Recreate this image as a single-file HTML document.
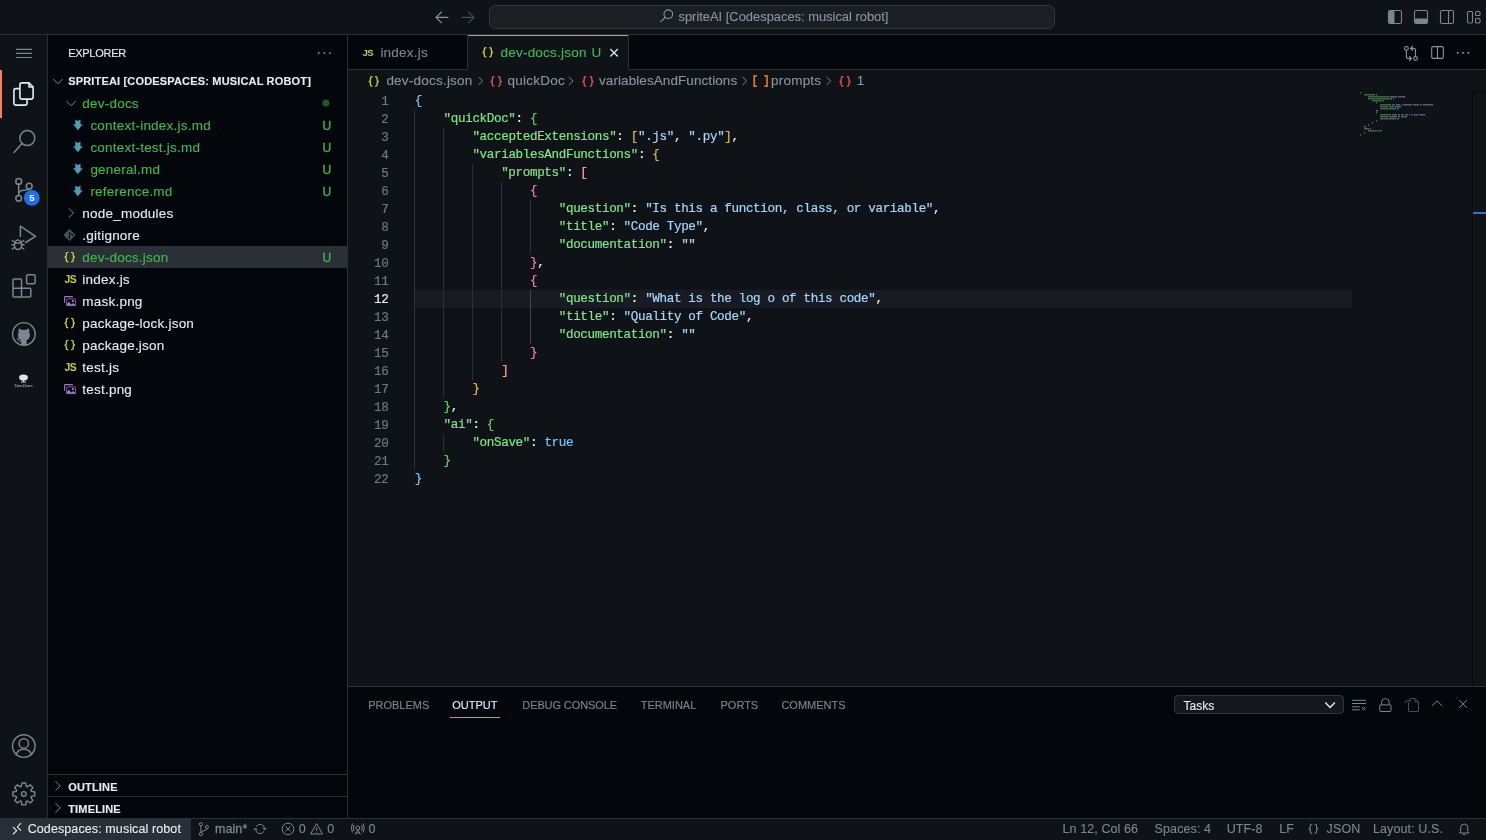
<!DOCTYPE html>
<html><head><meta charset="utf-8">
<style>
*{margin:0;padding:0;box-sizing:border-box}
html,body{width:1486px;height:840px;overflow:hidden;background:#0f1217;font-family:"Liberation Sans",sans-serif;color:#e6edf3}
.a{position:absolute}
.t{position:absolute;white-space:pre;-webkit-text-stroke-width:.12px;font-size:13.5px;letter-spacing:.22px;line-height:22px;padding-top:1px}
.mono{font-family:"Liberation Mono",monospace;-webkit-text-stroke-width:.2px;font-size:12.6px!important;letter-spacing:-.36px}
svg{position:absolute;overflow:visible}
</style></head><body><div style="position:absolute;left:0;top:0;width:1486px;height:840px;will-change:transform;overflow:hidden">

<!-- title bar -->
<div class="a" style="left:0;top:0;width:1486px;height:34px;background:#0f1217"></div>
<div class="a" style="left:0;top:34px;width:1486px;height:1px;background:#2b3035"></div>


<!-- title content -->
<svg style="left:0;top:0" width="1486" height="34">
 <g stroke="#8b949e" stroke-width="1.1" fill="none" stroke-linecap="round">
  <path d="M436 17.4 H448 M441.5 12 L436 17.4 L441.5 22.8"/>
 </g>
 <g stroke="#484f58" stroke-width="1.1" fill="none" stroke-linecap="round">
  <path d="M462 17.4 H474 M468.5 12 L474 17.4 L468.5 22.8"/>
 </g>
 <rect x="489.5" y="5.5" width="565" height="23" rx="6" fill="#1b1e23" stroke="#33373c" stroke-width="1"/>
 <g stroke="#8b949e" stroke-width="1.1" fill="none">
  <circle cx="668.3" cy="14.2" r="4.3"/>
  <path d="M665.2 17.3 L660.8 21.7" stroke-linecap="round"/>
 </g>
 <g fill="none" stroke="#7d8590" stroke-width="1.1">
  <rect x="1388.5" y="10.5" width="13" height="13" rx="1.5"/>
  <rect x="1414.5" y="10.5" width="13" height="13" rx="1.5"/>
  <rect x="1440.5" y="10.5" width="13" height="13" rx="1.5"/>
  <path d="M1448.5 10.5 V23.5"/>
  <rect x="1467.5" y="11.5" width="5" height="11.5" rx="1.2"/>
  <rect x="1475.5" y="11.5" width="4.5" height="4" rx="1"/>
  <rect x="1475.5" y="18.5" width="4.5" height="4.5" rx="1"/>
 </g>
 <g fill="#7d8590">
  <rect x="1389" y="11" width="5.5" height="12" rx="1"/>
  <rect x="1415" y="18.5" width="12" height="4.5" rx="1"/>
 </g>
</svg>
<div class="t" style="left:678.5px;top:5px;line-height:22px;color:#8b949e;letter-spacing:0;font-size:12.9px">spriteAI [Codespaces: musical robot]</div>

<!-- activity bar -->
<div class="a" style="left:0;top:35px;width:47px;height:783px;background:#0f1217"></div>
<div class="a" style="left:47px;top:35px;width:1px;height:783px;background:#2b3035"></div>


<!-- activity icons -->
<svg style="left:0;top:0" width="48" height="818">
 <g stroke="#7d8590" stroke-width="1.2" fill="none">
  <path d="M16 49.3H32 M16 53.4H32 M16 57.5H32"/>
 </g>
 <rect x="0" y="70" width="2" height="48" fill="#f78166"/>
 <g stroke="#e6edf3" stroke-width="1.6" fill="none" stroke-linejoin="round">
  <path d="M19.9 88.6 H15.9 Q13.9 88.6 13.9 90.6 V103.1 Q13.9 105.1 15.9 105.1 H25.1 Q27.1 105.1 27.1 103.1 V99.2"/>
  <path d="M29 82.9 H21.9 Q19.9 82.9 19.9 84.9 V97.1 Q19.9 99.1 21.9 99.1 H31.1 Q33.1 99.1 33.1 97.1 V87 Z"/>
  <path d="M29 82.9 V87 H33.1"/>
 </g>
 <g stroke="#7d8590" stroke-width="1.5" fill="none" stroke-linecap="round">
  <circle cx="27.3" cy="138.1" r="7.5"/>
  <path d="M22 143.6 L14 152.5"/>
  <circle cx="18.7" cy="181.4" r="2.9"/>
  <circle cx="29.2" cy="186.2" r="2.9"/>
  <circle cx="18.7" cy="198.3" r="2.9"/>
  <path d="M18.7 184.3 V195.4 M18.7 193.5 Q19.5 190.5 24 190.2 Q28.5 190 29 189"/>
 </g>
 <circle cx="31.8" cy="197.9" r="7.9" fill="#1f6feb"/>
 <text x="31.8" y="201.4" font-family="Liberation Sans" font-weight="700" font-size="9.5" fill="#fff" text-anchor="middle">5</text>
 <g stroke="#7d8590" stroke-width="1.5" fill="none" stroke-linecap="round" stroke-linejoin="round">
  <path d="M20.4 236.6 V226.2 L35.5 236.3 L25.6 242.5"/>
  <ellipse cx="18" cy="244.8" rx="3.6" ry="4.8"/>
  <path d="M14.4 243 H21.6 M12.3 240.5 L14.5 242 M23.7 240.5 L21.5 242 M12 244.7 H14.4 M24 244.7 H21.6 M12.3 249 L14.5 247.5 M23.7 249 L21.5 247.5"/>
 </g>
 <g stroke="#7d8590" stroke-width="1.5" fill="none" stroke-linejoin="round">
  <path d="M13 287.9 V280 Q13 279 14 279 H20.6 Q21.5 279 21.5 280 V296.8 M13 288.3 H30 Q30.8 288.3 30.8 289.3 V296 Q30.8 297 29.8 297 H14 Q13 297 13 296 V288"/>
  <rect x="26.6" y="274.7" width="8.5" height="9.1" rx="1.3"/>
 </g>
 <g>
  <circle cx="23.9" cy="333.9" r="11.3" stroke="#7d8590" stroke-width="1.4" fill="none"/>
  <path fill="#7d8590" d="M21.2 345.3 V340.2 Q18.6 339.4 17.9 336.6 Q17.4 334.2 18.6 332.4 Q18.3 330.4 18.9 328.6 Q20.6 328.9 21.9 330 Q23.9 329.5 25.9 330 Q27.2 328.9 28.9 328.6 Q29.5 330.4 29.2 332.4 Q30.4 334.2 29.9 336.6 Q29.2 339.4 26.6 340.2 V345.3 Z"/>
  <path d="M16.9 338.6 Q18.4 338.8 19.2 340.4 Q19.8 341.5 21.2 341.4" stroke="#7d8590" stroke-width="1.1" fill="none"/>
 </g>
 <g fill="#dfe3e8">
  <ellipse cx="23.5" cy="377.6" rx="4.4" ry="3.1"/>
  <rect x="23" y="379.5" width="1" height="2.4"/>
  <rect x="21" y="381.6" width="5" height="0.9"/>
 </g>
 <text x="23.6" y="387.2" font-family="Liberation Sans" font-size="4.3" fill="#c9d1d9" text-anchor="middle" letter-spacing="-0.1">Dev-Docs</text>
 <g stroke="#7d8590" stroke-width="1.4" fill="none">
  <circle cx="23.8" cy="746.1" r="11.3"/>
  <circle cx="23.8" cy="743.4" r="4.7"/>
  <path d="M15.9 755.2 Q17.8 749.3 23.8 749.3 Q29.8 749.3 31.7 755.2"/>
  <circle cx="23.8" cy="793.9" r="2.3"/>
  <path d="M21.30 786.41 L21.90 782.96 L25.70 782.96 L26.30 786.41 L27.33 786.83 L30.19 784.82 L32.88 787.51 L30.87 790.37 L31.29 791.40 L34.74 792.00 L34.74 795.80 L31.29 796.40 L30.87 797.43 L32.88 800.29 L30.19 802.98 L27.33 800.97 L26.30 801.39 L25.70 804.84 L21.90 804.84 L21.30 801.39 L20.27 800.97 L17.41 802.98 L14.72 800.29 L16.73 797.43 L16.31 796.40 L12.86 795.80 L12.86 792.00 L16.31 791.40 L16.73 790.37 L14.72 787.51 L17.41 784.82 L20.27 786.83 Z" stroke-linejoin="round"/>
 </g>
</svg>

<!-- sidebar -->
<div class="a" style="left:48px;top:35px;width:299px;height:783px;background:#03060a"></div>
<div class="a" style="left:347px;top:35px;width:1px;height:783px;background:#2b3035"></div>


<!-- sidebar content -->
<div class="a" style="left:48px;top:246px;width:299px;height:22px;background:#2b3037"></div>
<svg style="left:0;top:0" width="348" height="818">
<g fill="#7d8590"><circle cx="318.8" cy="53" r="1"/><circle cx="324.4" cy="53" r="1"/><circle cx="330" cy="53" r="1"/></g>
<g stroke="#7d8590" stroke-width="1" fill="none"><path d="M53.3 79 L58 83.8 L62.7 79"/></g>
<path d="M66.5 101 L71.1 105.8 L75.8 101" stroke="#7d8590" stroke-width="1" fill="none"/>
<circle cx="325.9" cy="103" r="3.5" fill="#1d5a29"/>
<path d="M75.3 119.4 L77.9 120.9 L80.5 119.4 V124.4 L82.8 124 L77.9 130.3 L73 124 L75.3 124.4 Z" fill="#519aba"/>
<path d="M75.3 141.4 L77.9 142.9 L80.5 141.4 V146.4 L82.8 146 L77.9 152.3 L73 146 L75.3 146.4 Z" fill="#519aba"/>
<path d="M75.3 163.4 L77.9 164.9 L80.5 163.4 V168.4 L82.8 168 L77.9 174.3 L73 168 L75.3 168.4 Z" fill="#519aba"/>
<path d="M75.3 185.4 L77.9 186.9 L80.5 185.4 V190.4 L82.8 190 L77.9 196.3 L73 190 L75.3 190.4 Z" fill="#519aba"/>
<path d="M68.8 208.3 L73.5 213 L68.8 217.7" stroke="#7d8590" stroke-width="1" fill="none"/>
<g transform="translate(0 -0.30000000000001137)"><path d="M69.5 229.6 L75.2 235.3 L69.5 241 L63.8 235.3 Z" fill="#41535b" stroke="#41535b" stroke-width="0.8" stroke-linejoin="round"/><path d="M69.4 232.6 V238.3 M69.6 232.6 L72.2 235.2" stroke="#03060a" stroke-width="1" fill="none"/><circle cx="69.4" cy="238.1" r="0.9" fill="#03060a"/><circle cx="72.4" cy="235.4" r="0.9" fill="#03060a"/></g>
<path d="M67.80 252.38 Q66.25 252.38 66.25 254.17 V255.86 Q66.25 257.05 64.50 257.05 Q66.25 257.05 66.25 258.24 V259.92 Q66.25 261.71 67.80 261.71 M71.70 252.38 Q73.25 252.38 73.25 254.17 V255.86 Q73.25 257.05 75.00 257.05 Q73.25 257.05 73.25 258.24 V259.92 Q73.25 261.71 71.70 261.71" stroke="#cbcb41" stroke-width="1.35" fill="none" stroke-linecap="round"/>
<text x="64.4" y="283.2" font-family="Liberation Sans" font-size="10.4" font-weight="700" fill="#cbcb41" letter-spacing="-0.5">JS</text>
<g transform="translate(0 0.0)"><path d="M64.6 302.8 V297 Q64.6 296.6 65 296.6 H72.9" stroke="#a074c4" stroke-width="1.1" fill="none"/><rect x="66.7" y="298.8" width="8.8" height="6.7" rx="0.8" stroke="#a074c4" stroke-opacity=".75" stroke-width="1" fill="none"/><path d="M66.3 305.8 V304.6 L68.8 301.8 L71.4 304.4 L73 302.9 L75.8 305 V305.8 Z" fill="#a074c4"/><rect x="72" y="299.9" width="1.9" height="2" fill="#a074c4"/></g>
<path d="M67.80 318.38 Q66.25 318.38 66.25 320.17 V321.86 Q66.25 323.05 64.50 323.05 Q66.25 323.05 66.25 324.24 V325.92 Q66.25 327.71 67.80 327.71 M71.70 318.38 Q73.25 318.38 73.25 320.17 V321.86 Q73.25 323.05 75.00 323.05 Q73.25 323.05 73.25 324.24 V325.92 Q73.25 327.71 71.70 327.71" stroke="#cbcb41" stroke-width="1.35" fill="none" stroke-linecap="round"/>
<path d="M67.80 340.38 Q66.25 340.38 66.25 342.17 V343.86 Q66.25 345.05 64.50 345.05 Q66.25 345.05 66.25 346.24 V347.92 Q66.25 349.71 67.80 349.71 M71.70 340.38 Q73.25 340.38 73.25 342.17 V343.86 Q73.25 345.05 75.00 345.05 Q73.25 345.05 73.25 346.24 V347.92 Q73.25 349.71 71.70 349.71" stroke="#cbcb41" stroke-width="1.35" fill="none" stroke-linecap="round"/>
<text x="64.4" y="371.2" font-family="Liberation Sans" font-size="10.4" font-weight="700" fill="#cbcb41" letter-spacing="-0.5">JS</text>
<g transform="translate(0 88.0)"><path d="M64.6 302.8 V297 Q64.6 296.6 65 296.6 H72.9" stroke="#a074c4" stroke-width="1.1" fill="none"/><rect x="66.7" y="298.8" width="8.8" height="6.7" rx="0.8" stroke="#a074c4" stroke-opacity=".75" stroke-width="1" fill="none"/><path d="M66.3 305.8 V304.6 L68.8 301.8 L71.4 304.4 L73 302.9 L75.8 305 V305.8 Z" fill="#a074c4"/><rect x="72" y="299.9" width="1.9" height="2" fill="#a074c4"/></g>
</svg>
<div class="t" style="left:82.3px;top:92px;color:#3fb950">dev-docs</div>
<div class="t" style="left:90.4px;top:114px;color:#3fb950">context-index.js.md</div>
<div class="t" style="left:322.6px;top:114px;color:#3fb950;font-size:12px;font-weight:400;letter-spacing:0;-webkit-text-stroke-width:.35px">U</div>
<div class="t" style="left:90.4px;top:136px;color:#3fb950">context-test.js.md</div>
<div class="t" style="left:322.6px;top:136px;color:#3fb950;font-size:12px;font-weight:400;letter-spacing:0;-webkit-text-stroke-width:.35px">U</div>
<div class="t" style="left:90.4px;top:158px;color:#3fb950">general.md</div>
<div class="t" style="left:322.6px;top:158px;color:#3fb950;font-size:12px;font-weight:400;letter-spacing:0;-webkit-text-stroke-width:.35px">U</div>
<div class="t" style="left:90.4px;top:180px;color:#3fb950">reference.md</div>
<div class="t" style="left:322.6px;top:180px;color:#3fb950;font-size:12px;font-weight:400;letter-spacing:0;-webkit-text-stroke-width:.35px">U</div>
<div class="t" style="left:82.3px;top:202px;color:#e6edf3">node_modules</div>
<div class="t" style="left:82.3px;top:224px;color:#e6edf3">.gitignore</div>
<div class="t" style="left:82.3px;top:246px;color:#3fb950">dev-docs.json</div>
<div class="t" style="left:322.6px;top:246px;color:#3fb950;font-size:12px;font-weight:400;letter-spacing:0;-webkit-text-stroke-width:.35px">U</div>
<div class="t" style="left:82.3px;top:268px;color:#e6edf3">index.js</div>
<div class="t" style="left:82.3px;top:290px;color:#e6edf3">mask.png</div>
<div class="t" style="left:82.3px;top:312px;color:#e6edf3">package-lock.json</div>
<div class="t" style="left:82.3px;top:334px;color:#e6edf3">package.json</div>
<div class="t" style="left:82.3px;top:356px;color:#e6edf3">test.js</div>
<div class="t" style="left:82.3px;top:378px;color:#e6edf3">test.png</div>
<div class="t" style="left:68.2px;top:41px;font-size:11px;letter-spacing:-0.28px;color:#e6edf3">EXPLORER</div>
<div class="t" style="left:68.2px;top:69px;font-size:11px;font-weight:700;letter-spacing:0.17px;color:#e6edf3">SPRITEAI [CODESPACES: MUSICAL ROBOT]</div>
<div class="a" style="left:48px;top:774px;width:299px;height:1px;background:#2b3035"></div>
<div class="a" style="left:48px;top:796px;width:299px;height:1px;background:#2b3035"></div>
<svg style="left:0;top:0" width="348" height="818"><g stroke="#7d8590" stroke-width="1" fill="none"><path d="M55.5 781.2 L60.2 785.9 L55.5 790.6 M55.5 803.2 L60.2 807.9 L55.5 812.6"/></g></svg>
<div class="t" style="left:68.2px;top:775px;font-size:11px;font-weight:700;letter-spacing:0.17px;color:#e6edf3">OUTLINE</div>
<div class="t" style="left:68.2px;top:797px;font-size:11px;font-weight:700;letter-spacing:0.17px;color:#e6edf3">TIMELINE</div>

<!-- tabs bar -->
<div class="a" style="left:348px;top:35px;width:1138px;height:35px;background:#03060a"></div>
<div class="a" style="left:348px;top:69px;width:1138px;height:1px;background:#2b3035"></div>

<!-- editor -->
<div class="a" style="left:348px;top:70px;width:1138px;height:616px;background:#0f1217"></div>


<!-- editor content -->
<div class="a" style="left:414px;top:290px;width:938px;height:18px;background:#181c22"></div>
<div class="a" style="left:414px;top:110px;width:1px;height:18px;background:#2a3038"></div>
<div class="a" style="left:414px;top:128px;width:1px;height:18px;background:#2a3038"></div>
<div class="a" style="left:443px;top:128px;width:1px;height:18px;background:#2a3038"></div>
<div class="a" style="left:414px;top:146px;width:1px;height:18px;background:#2a3038"></div>
<div class="a" style="left:443px;top:146px;width:1px;height:18px;background:#2a3038"></div>
<div class="a" style="left:414px;top:164px;width:1px;height:18px;background:#2a3038"></div>
<div class="a" style="left:443px;top:164px;width:1px;height:18px;background:#2a3038"></div>
<div class="a" style="left:472px;top:164px;width:1px;height:18px;background:#2a3038"></div>
<div class="a" style="left:414px;top:182px;width:1px;height:18px;background:#2a3038"></div>
<div class="a" style="left:443px;top:182px;width:1px;height:18px;background:#2a3038"></div>
<div class="a" style="left:472px;top:182px;width:1px;height:18px;background:#2a3038"></div>
<div class="a" style="left:501px;top:182px;width:1px;height:18px;background:#2a3038"></div>
<div class="a" style="left:414px;top:200px;width:1px;height:18px;background:#2a3038"></div>
<div class="a" style="left:443px;top:200px;width:1px;height:18px;background:#2a3038"></div>
<div class="a" style="left:472px;top:200px;width:1px;height:18px;background:#2a3038"></div>
<div class="a" style="left:501px;top:200px;width:1px;height:18px;background:#2a3038"></div>
<div class="a" style="left:530px;top:200px;width:1px;height:18px;background:#2a3038"></div>
<div class="a" style="left:414px;top:218px;width:1px;height:18px;background:#2a3038"></div>
<div class="a" style="left:443px;top:218px;width:1px;height:18px;background:#2a3038"></div>
<div class="a" style="left:472px;top:218px;width:1px;height:18px;background:#2a3038"></div>
<div class="a" style="left:501px;top:218px;width:1px;height:18px;background:#2a3038"></div>
<div class="a" style="left:530px;top:218px;width:1px;height:18px;background:#2a3038"></div>
<div class="a" style="left:414px;top:236px;width:1px;height:18px;background:#2a3038"></div>
<div class="a" style="left:443px;top:236px;width:1px;height:18px;background:#2a3038"></div>
<div class="a" style="left:472px;top:236px;width:1px;height:18px;background:#2a3038"></div>
<div class="a" style="left:501px;top:236px;width:1px;height:18px;background:#2a3038"></div>
<div class="a" style="left:530px;top:236px;width:1px;height:18px;background:#2a3038"></div>
<div class="a" style="left:414px;top:254px;width:1px;height:18px;background:#2a3038"></div>
<div class="a" style="left:443px;top:254px;width:1px;height:18px;background:#2a3038"></div>
<div class="a" style="left:472px;top:254px;width:1px;height:18px;background:#2a3038"></div>
<div class="a" style="left:501px;top:254px;width:1px;height:18px;background:#2a3038"></div>
<div class="a" style="left:414px;top:272px;width:1px;height:18px;background:#2a3038"></div>
<div class="a" style="left:443px;top:272px;width:1px;height:18px;background:#2a3038"></div>
<div class="a" style="left:472px;top:272px;width:1px;height:18px;background:#2a3038"></div>
<div class="a" style="left:501px;top:272px;width:1px;height:18px;background:#2a3038"></div>
<div class="a" style="left:414px;top:290px;width:1px;height:18px;background:#2a3038"></div>
<div class="a" style="left:443px;top:290px;width:1px;height:18px;background:#2a3038"></div>
<div class="a" style="left:472px;top:290px;width:1px;height:18px;background:#2a3038"></div>
<div class="a" style="left:501px;top:290px;width:1px;height:18px;background:#2a3038"></div>
<div class="a" style="left:530px;top:290px;width:1px;height:18px;background:#3d444d"></div>
<div class="a" style="left:414px;top:308px;width:1px;height:18px;background:#2a3038"></div>
<div class="a" style="left:443px;top:308px;width:1px;height:18px;background:#2a3038"></div>
<div class="a" style="left:472px;top:308px;width:1px;height:18px;background:#2a3038"></div>
<div class="a" style="left:501px;top:308px;width:1px;height:18px;background:#2a3038"></div>
<div class="a" style="left:530px;top:308px;width:1px;height:18px;background:#3d444d"></div>
<div class="a" style="left:414px;top:326px;width:1px;height:18px;background:#2a3038"></div>
<div class="a" style="left:443px;top:326px;width:1px;height:18px;background:#2a3038"></div>
<div class="a" style="left:472px;top:326px;width:1px;height:18px;background:#2a3038"></div>
<div class="a" style="left:501px;top:326px;width:1px;height:18px;background:#2a3038"></div>
<div class="a" style="left:530px;top:326px;width:1px;height:18px;background:#3d444d"></div>
<div class="a" style="left:414px;top:344px;width:1px;height:18px;background:#2a3038"></div>
<div class="a" style="left:443px;top:344px;width:1px;height:18px;background:#2a3038"></div>
<div class="a" style="left:472px;top:344px;width:1px;height:18px;background:#2a3038"></div>
<div class="a" style="left:501px;top:344px;width:1px;height:18px;background:#2a3038"></div>
<div class="a" style="left:414px;top:362px;width:1px;height:18px;background:#2a3038"></div>
<div class="a" style="left:443px;top:362px;width:1px;height:18px;background:#2a3038"></div>
<div class="a" style="left:472px;top:362px;width:1px;height:18px;background:#2a3038"></div>
<div class="a" style="left:414px;top:380px;width:1px;height:18px;background:#2a3038"></div>
<div class="a" style="left:443px;top:380px;width:1px;height:18px;background:#2a3038"></div>
<div class="a" style="left:414px;top:398px;width:1px;height:18px;background:#2a3038"></div>
<div class="a" style="left:414px;top:416px;width:1px;height:18px;background:#2a3038"></div>
<div class="a" style="left:414px;top:434px;width:1px;height:18px;background:#2a3038"></div>
<div class="a" style="left:443px;top:434px;width:1px;height:18px;background:#2a3038"></div>
<div class="a" style="left:414px;top:452px;width:1px;height:18px;background:#2a3038"></div>
<div class="a mono" style="left:348px;top:92px;width:40.5px;text-align:right;font-size:12px;line-height:18px;padding-top:1px;color:#6e7681">1</div>
<div class="a mono" style="left:414.8px;top:92px;white-space:pre;font-size:12px;line-height:18px;padding-top:0px"><span style="color:#79c0ff">{</span></div>
<div class="a mono" style="left:348px;top:110px;width:40.5px;text-align:right;font-size:12px;line-height:18px;padding-top:1px;color:#6e7681">2</div>
<div class="a mono" style="left:414.8px;top:110px;white-space:pre;font-size:12px;line-height:18px;padding-top:0px">    <span style="color:#7ee787">"quickDoc"</span><span style="color:#e6edf3">: </span><span style="color:#56d364">{</span></div>
<div class="a mono" style="left:348px;top:128px;width:40.5px;text-align:right;font-size:12px;line-height:18px;padding-top:1px;color:#6e7681">3</div>
<div class="a mono" style="left:414.8px;top:128px;white-space:pre;font-size:12px;line-height:18px;padding-top:0px">        <span style="color:#7ee787">"acceptedExtensions"</span><span style="color:#e6edf3">: </span><span style="color:#e3b341">[</span><span style="color:#a5d6ff">".js"</span><span style="color:#e6edf3">, </span><span style="color:#a5d6ff">".py"</span><span style="color:#e3b341">]</span><span style="color:#e6edf3">,</span></div>
<div class="a mono" style="left:348px;top:146px;width:40.5px;text-align:right;font-size:12px;line-height:18px;padding-top:1px;color:#6e7681">4</div>
<div class="a mono" style="left:414.8px;top:146px;white-space:pre;font-size:12px;line-height:18px;padding-top:0px">        <span style="color:#7ee787">"variablesAndFunctions"</span><span style="color:#e6edf3">: </span><span style="color:#e3b341">{</span></div>
<div class="a mono" style="left:348px;top:164px;width:40.5px;text-align:right;font-size:12px;line-height:18px;padding-top:1px;color:#6e7681">5</div>
<div class="a mono" style="left:414.8px;top:164px;white-space:pre;font-size:12px;line-height:18px;padding-top:0px">            <span style="color:#7ee787">"prompts"</span><span style="color:#e6edf3">: </span><span style="color:#ffa198">[</span></div>
<div class="a mono" style="left:348px;top:182px;width:40.5px;text-align:right;font-size:12px;line-height:18px;padding-top:1px;color:#6e7681">6</div>
<div class="a mono" style="left:414.8px;top:182px;white-space:pre;font-size:12px;line-height:18px;padding-top:0px">                <span style="color:#f778ba">{</span></div>
<div class="a mono" style="left:348px;top:200px;width:40.5px;text-align:right;font-size:12px;line-height:18px;padding-top:1px;color:#6e7681">7</div>
<div class="a mono" style="left:414.8px;top:200px;white-space:pre;font-size:12px;line-height:18px;padding-top:0px">                    <span style="color:#7ee787">"question"</span><span style="color:#e6edf3">: </span><span style="color:#a5d6ff">"Is this a function, class, or variable"</span><span style="color:#e6edf3">,</span></div>
<div class="a mono" style="left:348px;top:218px;width:40.5px;text-align:right;font-size:12px;line-height:18px;padding-top:1px;color:#6e7681">8</div>
<div class="a mono" style="left:414.8px;top:218px;white-space:pre;font-size:12px;line-height:18px;padding-top:0px">                    <span style="color:#7ee787">"title"</span><span style="color:#e6edf3">: </span><span style="color:#a5d6ff">"Code Type"</span><span style="color:#e6edf3">,</span></div>
<div class="a mono" style="left:348px;top:236px;width:40.5px;text-align:right;font-size:12px;line-height:18px;padding-top:1px;color:#6e7681">9</div>
<div class="a mono" style="left:414.8px;top:236px;white-space:pre;font-size:12px;line-height:18px;padding-top:0px">                    <span style="color:#7ee787">"documentation"</span><span style="color:#e6edf3">: </span><span style="color:#a5d6ff">""</span></div>
<div class="a mono" style="left:348px;top:254px;width:40.5px;text-align:right;font-size:12px;line-height:18px;padding-top:1px;color:#6e7681">10</div>
<div class="a mono" style="left:414.8px;top:254px;white-space:pre;font-size:12px;line-height:18px;padding-top:0px">                <span style="color:#f778ba">}</span><span style="color:#e6edf3">,</span></div>
<div class="a mono" style="left:348px;top:272px;width:40.5px;text-align:right;font-size:12px;line-height:18px;padding-top:1px;color:#6e7681">11</div>
<div class="a mono" style="left:414.8px;top:272px;white-space:pre;font-size:12px;line-height:18px;padding-top:0px">                <span style="color:#f778ba">{</span></div>
<div class="a mono" style="left:348px;top:290px;width:40.5px;text-align:right;font-size:12px;line-height:18px;padding-top:1px;color:#e6edf3">12</div>
<div class="a mono" style="left:414.8px;top:290px;white-space:pre;font-size:12px;line-height:18px;padding-top:0px">                    <span style="color:#7ee787">"question"</span><span style="color:#e6edf3">: </span><span style="color:#a5d6ff">"What is the log o of this code"</span><span style="color:#e6edf3">,</span></div>
<div class="a mono" style="left:348px;top:308px;width:40.5px;text-align:right;font-size:12px;line-height:18px;padding-top:1px;color:#6e7681">13</div>
<div class="a mono" style="left:414.8px;top:308px;white-space:pre;font-size:12px;line-height:18px;padding-top:0px">                    <span style="color:#7ee787">"title"</span><span style="color:#e6edf3">: </span><span style="color:#a5d6ff">"Quality of Code"</span><span style="color:#e6edf3">,</span></div>
<div class="a mono" style="left:348px;top:326px;width:40.5px;text-align:right;font-size:12px;line-height:18px;padding-top:1px;color:#6e7681">14</div>
<div class="a mono" style="left:414.8px;top:326px;white-space:pre;font-size:12px;line-height:18px;padding-top:0px">                    <span style="color:#7ee787">"documentation"</span><span style="color:#e6edf3">: </span><span style="color:#a5d6ff">""</span></div>
<div class="a mono" style="left:348px;top:344px;width:40.5px;text-align:right;font-size:12px;line-height:18px;padding-top:1px;color:#6e7681">15</div>
<div class="a mono" style="left:414.8px;top:344px;white-space:pre;font-size:12px;line-height:18px;padding-top:0px">                <span style="color:#f778ba">}</span></div>
<div class="a mono" style="left:348px;top:362px;width:40.5px;text-align:right;font-size:12px;line-height:18px;padding-top:1px;color:#6e7681">16</div>
<div class="a mono" style="left:414.8px;top:362px;white-space:pre;font-size:12px;line-height:18px;padding-top:0px">            <span style="color:#ffa198">]</span></div>
<div class="a mono" style="left:348px;top:380px;width:40.5px;text-align:right;font-size:12px;line-height:18px;padding-top:1px;color:#6e7681">17</div>
<div class="a mono" style="left:414.8px;top:380px;white-space:pre;font-size:12px;line-height:18px;padding-top:0px">        <span style="color:#e3b341">}</span></div>
<div class="a mono" style="left:348px;top:398px;width:40.5px;text-align:right;font-size:12px;line-height:18px;padding-top:1px;color:#6e7681">18</div>
<div class="a mono" style="left:414.8px;top:398px;white-space:pre;font-size:12px;line-height:18px;padding-top:0px">    <span style="color:#56d364">}</span><span style="color:#e6edf3">,</span></div>
<div class="a mono" style="left:348px;top:416px;width:40.5px;text-align:right;font-size:12px;line-height:18px;padding-top:1px;color:#6e7681">19</div>
<div class="a mono" style="left:414.8px;top:416px;white-space:pre;font-size:12px;line-height:18px;padding-top:0px">    <span style="color:#7ee787">"ai"</span><span style="color:#e6edf3">: </span><span style="color:#56d364">{</span></div>
<div class="a mono" style="left:348px;top:434px;width:40.5px;text-align:right;font-size:12px;line-height:18px;padding-top:1px;color:#6e7681">20</div>
<div class="a mono" style="left:414.8px;top:434px;white-space:pre;font-size:12px;line-height:18px;padding-top:0px">        <span style="color:#7ee787">"onSave"</span><span style="color:#e6edf3">: </span><span style="color:#79c0ff">true</span></div>
<div class="a mono" style="left:348px;top:452px;width:40.5px;text-align:right;font-size:12px;line-height:18px;padding-top:1px;color:#6e7681">21</div>
<div class="a mono" style="left:414.8px;top:452px;white-space:pre;font-size:12px;line-height:18px;padding-top:0px">    <span style="color:#56d364">}</span></div>
<div class="a mono" style="left:348px;top:470px;width:40.5px;text-align:right;font-size:12px;line-height:18px;padding-top:1px;color:#6e7681">22</div>
<div class="a mono" style="left:414.8px;top:470px;white-space:pre;font-size:12px;line-height:18px;padding-top:0px"><span style="color:#79c0ff">}</span></div>

<div class="a" style="left:467px;top:35px;width:1px;height:34px;background:#2b3035"></div>
<div class="a" style="left:468px;top:35px;width:160px;height:35px;background:#0f1217"></div>
<div class="a" style="left:468px;top:35px;width:160px;height:1px;background:#f78166"></div>
<div class="a" style="left:628px;top:35px;width:1px;height:34px;background:#2b3035"></div>
<svg style="left:0;top:0" width="1486" height="100">
 <text x="362.4" y="56.3" font-family="Liberation Sans" font-size="9.6" font-weight="700" fill="#cbcb41" letter-spacing="-0.4">JS</text>
 <path d="M485.80 47.76 Q484.25 47.76 484.25 49.52 V51.17 Q484.25 52.34 482.50 52.34 Q484.25 52.34 484.25 53.51 V55.17 Q484.25 56.92 485.80 56.92 M489.80 47.76 Q491.35 47.76 491.35 49.52 V51.17 Q491.35 52.34 493.10 52.34 Q491.35 52.34 491.35 53.51 V55.17 Q491.35 56.92 489.80 56.92" stroke="#cbcb41" stroke-width="1.35" fill="none" stroke-linecap="round"/>
 <path d="M610.3 49 L617.8 56.5 M617.8 49 L610.3 56.5" stroke="#e6edf3" stroke-width="1.2"/>
 <path d="M372.00 76.72 Q370.45 76.72 370.45 78.53 V80.24 Q370.45 81.45 368.70 81.45 Q370.45 81.45 370.45 82.66 V84.38 Q370.45 86.19 372.00 86.19 M375.60 76.72 Q377.15 76.72 377.15 78.53 V80.24 Q377.15 81.45 378.90 81.45 Q377.15 81.45 377.15 82.66 V84.38 Q377.15 86.19 375.60 86.19" stroke="#cbcb41" stroke-width="1.35" fill="none" stroke-linecap="round"/>
 <path d="M478.5 77 L482.7 81 L478.5 85 M568.8 77 L573 81 L568.8 85 M742.5 77 L746.7 81 L742.5 85 M826.5 77 L830.7 81 L826.5 85" stroke="#7d8590" stroke-width="1" fill="none"/>
 <path d="M493.90 76.72 Q492.35 76.72 492.35 78.53 V80.24 Q492.35 81.45 490.60 81.45 Q492.35 81.45 492.35 82.66 V84.38 Q492.35 86.19 493.90 86.19 M498.50 76.72 Q500.05 76.72 500.05 78.53 V80.24 Q500.05 81.45 501.80 81.45 Q500.05 81.45 500.05 82.66 V84.38 Q500.05 86.19 498.50 86.19" stroke="#e5534b" stroke-width="1.35" fill="none" stroke-linecap="round"/>
 <path d="M585.70 76.72 Q584.15 76.72 584.15 78.53 V80.24 Q584.15 81.45 582.40 81.45 Q584.15 81.45 584.15 82.66 V84.38 Q584.15 86.19 585.70 86.19 M590.30 76.72 Q591.85 76.72 591.85 78.53 V80.24 Q591.85 81.45 593.60 81.45 Q591.85 81.45 591.85 82.66 V84.38 Q591.85 86.19 590.30 86.19" stroke="#e5534b" stroke-width="1.35" fill="none" stroke-linecap="round"/>
 <path d="M842.80 76.72 Q841.25 76.72 841.25 78.53 V80.24 Q841.25 81.45 839.50 81.45 Q841.25 81.45 841.25 82.66 V84.38 Q841.25 86.19 842.80 86.19 M847.40 76.72 Q848.95 76.72 848.95 78.53 V80.24 Q848.95 81.45 850.70 81.45 Q848.95 81.45 848.95 82.66 V84.38 Q848.95 86.19 847.40 86.19" stroke="#e5534b" stroke-width="1.35" fill="none" stroke-linecap="round"/>
 <path d="M756.8 75.8 H754.2 V86.1 H756.8 M764.4 75.8 H767 V86.1 H764.4" stroke="#d8772f" stroke-width="1.7" fill="none"/>
</svg>
<div class="t" style="left:380.4px;top:36px;line-height:34px;padding-top:0;color:#7d8590">index.js</div>
<div class="t" style="left:500.5px;top:36px;line-height:34px;padding-top:0;color:#3fb950">dev-docs.json</div>
<div class="t" style="left:591.5px;top:36px;line-height:34px;padding-top:0;color:#3fb950;letter-spacing:0">U</div>
<div class="t" style="left:386.4px;top:70px;line-height:22px;padding-top:0;color:#8b949e">dev-docs.json</div>
<div class="t" style="left:507.6px;top:70px;line-height:22px;padding-top:0;color:#8b949e">quickDoc</div>
<div class="t" style="left:599px;top:70px;line-height:22px;padding-top:0;color:#8b949e;letter-spacing:.08px">variablesAndFunctions</div>
<div class="t" style="left:771px;top:70px;line-height:22px;padding-top:0;color:#8b949e">prompts</div>
<div class="t" style="left:856.8px;top:70px;line-height:22px;padding-top:0;color:#8b949e">1</div>


<svg style="left:0;top:0" width="1486" height="100">
 <g stroke="#8b949e" stroke-width="1.1" fill="none" stroke-linecap="round" stroke-linejoin="round">
  <circle cx="1406.4" cy="48.4" r="1.9"/>
  <circle cx="1415.5" cy="58.5" r="1.9"/>
  <path d="M1406.4 50.3 V56.5 Q1406.4 58.5 1408.4 58.5 H1411.4 M1409.4 56.5 L1411.4 58.5 L1409.4 60.5"/>
  <path d="M1415.5 56.6 V50.4 Q1415.5 48.4 1413.5 48.4 H1410.5 M1412.5 46.4 L1410.5 48.4 L1412.5 50.4"/>
  <rect x="1431.7" y="46.6" width="11.6" height="11.8" rx="1.3"/>
  <path d="M1437.5 46.6 V58.4"/>
 </g>
 <g fill="#8b949e"><rect x="1456.9" y="52" width="1.7" height="1.7"/><rect x="1462.2" y="52" width="1.7" height="1.7"/><rect x="1467.5" y="52" width="1.7" height="1.7"/></g>
</svg>

<!-- minimap -->
<svg style="left:0;top:0" width="1486" height="200"><g opacity="0.4"><rect x="1360" y="92" width="1" height="1.5" fill="#e6edf3"/><rect x="1364" y="94" width="10" height="1.5" fill="#7ee787"/><rect x="1374" y="94" width="1" height="1.5" fill="#e6edf3"/><rect x="1376" y="94" width="1" height="1.5" fill="#e6edf3"/><rect x="1368" y="96" width="20" height="1.5" fill="#7ee787"/><rect x="1388" y="96" width="1" height="1.5" fill="#e6edf3"/><rect x="1390" y="96" width="1" height="1.5" fill="#e6edf3"/><rect x="1391" y="96" width="5" height="1.5" fill="#a5d6ff"/><rect x="1396" y="96" width="1" height="1.5" fill="#e6edf3"/><rect x="1398" y="96" width="5" height="1.5" fill="#a5d6ff"/><rect x="1403" y="96" width="1" height="1.5" fill="#e6edf3"/><rect x="1404" y="96" width="1" height="1.5" fill="#e6edf3"/><rect x="1368" y="98" width="23" height="1.5" fill="#7ee787"/><rect x="1391" y="98" width="1" height="1.5" fill="#e6edf3"/><rect x="1393" y="98" width="1" height="1.5" fill="#e6edf3"/><rect x="1372" y="100" width="9" height="1.5" fill="#7ee787"/><rect x="1381" y="100" width="1" height="1.5" fill="#e6edf3"/><rect x="1383" y="100" width="1" height="1.5" fill="#e6edf3"/><rect x="1376" y="102" width="1" height="1.5" fill="#e6edf3"/><rect x="1380" y="104" width="10" height="1.5" fill="#7ee787"/><rect x="1390" y="104" width="1" height="1.5" fill="#e6edf3"/><rect x="1392" y="104" width="3" height="1.5" fill="#a5d6ff"/><rect x="1396" y="104" width="4" height="1.5" fill="#a5d6ff"/><rect x="1401" y="104" width="1" height="1.5" fill="#a5d6ff"/><rect x="1403" y="104" width="9" height="1.5" fill="#a5d6ff"/><rect x="1413" y="104" width="6" height="1.5" fill="#a5d6ff"/><rect x="1420" y="104" width="2" height="1.5" fill="#a5d6ff"/><rect x="1423" y="104" width="9" height="1.5" fill="#a5d6ff"/><rect x="1432" y="104" width="1" height="1.5" fill="#e6edf3"/><rect x="1380" y="106" width="7" height="1.5" fill="#7ee787"/><rect x="1387" y="106" width="1" height="1.5" fill="#e6edf3"/><rect x="1389" y="106" width="5" height="1.5" fill="#a5d6ff"/><rect x="1395" y="106" width="5" height="1.5" fill="#a5d6ff"/><rect x="1400" y="106" width="1" height="1.5" fill="#e6edf3"/><rect x="1380" y="108" width="15" height="1.5" fill="#7ee787"/><rect x="1395" y="108" width="1" height="1.5" fill="#e6edf3"/><rect x="1397" y="108" width="2" height="1.5" fill="#a5d6ff"/><rect x="1376" y="110" width="1" height="1.5" fill="#e6edf3"/><rect x="1377" y="110" width="1" height="1.5" fill="#e6edf3"/><rect x="1376" y="112" width="1" height="1.5" fill="#e6edf3"/><rect x="1380" y="114" width="10" height="1.5" fill="#7ee787"/><rect x="1390" y="114" width="1" height="1.5" fill="#e6edf3"/><rect x="1392" y="114" width="5" height="1.5" fill="#a5d6ff"/><rect x="1398" y="114" width="2" height="1.5" fill="#a5d6ff"/><rect x="1401" y="114" width="3" height="1.5" fill="#a5d6ff"/><rect x="1405" y="114" width="3" height="1.5" fill="#a5d6ff"/><rect x="1409" y="114" width="1" height="1.5" fill="#a5d6ff"/><rect x="1411" y="114" width="2" height="1.5" fill="#a5d6ff"/><rect x="1414" y="114" width="4" height="1.5" fill="#a5d6ff"/><rect x="1419" y="114" width="5" height="1.5" fill="#a5d6ff"/><rect x="1424" y="114" width="1" height="1.5" fill="#e6edf3"/><rect x="1380" y="116" width="7" height="1.5" fill="#7ee787"/><rect x="1387" y="116" width="1" height="1.5" fill="#e6edf3"/><rect x="1389" y="116" width="8" height="1.5" fill="#a5d6ff"/><rect x="1398" y="116" width="2" height="1.5" fill="#a5d6ff"/><rect x="1401" y="116" width="5" height="1.5" fill="#a5d6ff"/><rect x="1406" y="116" width="1" height="1.5" fill="#e6edf3"/><rect x="1380" y="118" width="15" height="1.5" fill="#7ee787"/><rect x="1395" y="118" width="1" height="1.5" fill="#e6edf3"/><rect x="1397" y="118" width="2" height="1.5" fill="#a5d6ff"/><rect x="1376" y="120" width="1" height="1.5" fill="#e6edf3"/><rect x="1372" y="122" width="1" height="1.5" fill="#e6edf3"/><rect x="1368" y="124" width="1" height="1.5" fill="#e6edf3"/><rect x="1364" y="126" width="1" height="1.5" fill="#e6edf3"/><rect x="1365" y="126" width="1" height="1.5" fill="#e6edf3"/><rect x="1364" y="128" width="4" height="1.5" fill="#7ee787"/><rect x="1368" y="128" width="1" height="1.5" fill="#e6edf3"/><rect x="1370" y="128" width="1" height="1.5" fill="#e6edf3"/><rect x="1368" y="130" width="8" height="1.5" fill="#7ee787"/><rect x="1376" y="130" width="1" height="1.5" fill="#e6edf3"/><rect x="1378" y="130" width="4" height="1.5" fill="#79c0ff"/><rect x="1364" y="132" width="1" height="1.5" fill="#e6edf3"/><rect x="1360" y="134" width="1" height="1.5" fill="#e6edf3"/></g></svg>
<div class="a" style="left:1472px;top:92px;width:1px;height:594px;background:#06090d"></div>
<div class="a" style="left:1472px;top:91px;width:14px;height:1px;background:#06090d"></div>
<div class="a" style="left:1473px;top:212px;width:13px;height:2px;background:#2f6fd6"></div>

<!-- panel -->
<div class="a" style="left:348px;top:686px;width:1138px;height:1px;background:#2b3035"></div>
<div class="a" style="left:348px;top:687px;width:1138px;height:131px;background:#03060a"></div>

<!-- status bar -->
<div class="a" style="left:0;top:818px;width:1486px;height:22px;background:#0f1217"></div>
<div class="a" style="left:0;top:818px;width:1486px;height:1px;background:#2b3035"></div>
<div class="a" style="left:0;top:818px;width:191px;height:22px;background:#2a2e36"></div>


<!-- panel content -->
<div class="t" style="left:368.2px;top:694px;font-size:11px;letter-spacing:0;padding-top:0;color:#7d8590">PROBLEMS</div>
<div class="t" style="left:452.3px;top:694px;font-size:11px;letter-spacing:0;padding-top:0;color:#e6edf3">OUTPUT</div>
<div class="a" style="left:450px;top:716.5px;width:50px;height:1.5px;background:#f78166"></div>
<div class="t" style="left:522.3px;top:694px;font-size:11px;letter-spacing:-0.1px;padding-top:0;color:#7d8590">DEBUG CONSOLE</div>
<div class="t" style="left:640.7px;top:694px;font-size:11px;letter-spacing:0;padding-top:0;color:#7d8590">TERMINAL</div>
<div class="t" style="left:720.5px;top:694px;font-size:11px;letter-spacing:0;padding-top:0;color:#7d8590">PORTS</div>
<div class="t" style="left:781.4px;top:694px;font-size:11px;letter-spacing:0;padding-top:0;color:#7d8590">COMMENTS</div>
<svg style="left:0;top:0" width="1486" height="840">
 <rect x="1174.5" y="695.5" width="169" height="18" rx="3.5" fill="#14171c" stroke="#30353a"/>
 <path d="M1325.3 702.6 L1330.1 707.5 L1334.9 702.6" stroke="#e6edf3" stroke-width="1.4" fill="none"/>
 <g stroke="#7d8590" stroke-width="1" fill="none">
  <path d="M1352 700.3 H1366 M1352 703.5 H1366 M1352 706.8 H1359.8 M1352 709.8 H1359.8 M1361.8 706.8 L1365.6 710.3 M1365.6 706.8 L1361.8 710.3"/>
  <rect x="1379.8" y="704.9" width="11.2" height="6.6" rx="0.8"/>
  <path d="M1381.6 704.9 V702 Q1381.6 698.6 1385.4 698.6 Q1389.2 698.6 1389.2 702 V704.9"/>
  <path d="M1431.9 705.8 L1437 700.8 L1442.1 705.8"/>
  <path d="M1459.2 700 L1467 707.9 M1467 700 L1459.2 707.9"/>
 </g>
 <g stroke="#484f58" stroke-width="1" fill="none">
  <path d="M1408.5 702 V711 Q1408.5 711.5 1409 711.5 H1418 Q1418.5 711.5 1418.5 711 V702 L1415 698.5 H1410.5 M1415 698.5 V702 H1418.5"/>
  <path d="M1405 703 Q1405 700.3 1408.5 700.3 H1410.5 M1409 698.8 L1410.6 700.3 L1409 701.8"/>
 </g>
</svg>
<div class="t" style="left:1183.5px;top:695px;font-size:12px;letter-spacing:0;padding-top:0;color:#e6edf3">Tasks</div>

<!-- status bar content -->
<svg style="left:0;top:0" width="1486" height="840">
 <path d="M13.3 827.3 L16.7 830.6 L13.3 834 M20.7 823.4 L17.4 826.9 L20.7 830.4" stroke="#e6edf3" stroke-width="1.1" fill="none" stroke-linecap="round"/>
 <g stroke="#7d8590" stroke-width="1" fill="none">
  <circle cx="200.9" cy="824.2" r="1.6"/>
  <circle cx="206.8" cy="827" r="1.6"/>
  <circle cx="200.9" cy="834.1" r="1.6"/>
  <path d="M200.9 825.8 V832.5 M206.8 828.6 Q206.8 830.6 203 831 Q200.9 831.3 200.9 832.5"/>
  <path d="M256.3 826.4 A4.5 4.5 0 0 1 264.6 829 M262.9 828.1 L264.7 829.9 L266.5 828.1 M263.9 831.6 A4.5 4.5 0 0 1 255.6 829 M253.7 829.9 L255.5 828.1 L257.3 829.9" stroke-linecap="round" stroke-linejoin="round"/>
  <circle cx="288" cy="828.9" r="5.8"/>
  <path d="M285.6 826.5 L290.4 831.3 M290.4 826.5 L285.6 831.3"/>
  <path d="M316.6 823.6 L322.6 834 H310.6 Z M316.6 827.5 V831 M316.6 832.2 V833"/>
  <path d="M355.8 828 a2 2 0 1 1 4 0 a2 2 0 1 1 -4 0 M357.8 830 L355 834.5 M357.8 830 L360.6 834.5 M355.5 833 H360.1 M354 825 Q352.6 828 354 831 M361.6 825 Q363 828 361.6 831 M352.5 823.5 Q350.2 828 352.5 832.5 M363.1 823.5 Q365.4 828 363.1 832.5"/>
  <path d="M1311.80 824.25 Q1310.25 824.25 1310.25 825.99 V827.63 Q1310.25 828.79 1308.50 828.79 Q1310.25 828.79 1310.25 829.95 V831.59 Q1310.25 833.33 1311.80 833.33 M1315.00 824.25 Q1316.55 824.25 1316.55 825.99 V827.63 Q1316.55 828.79 1318.30 828.79 Q1316.55 828.79 1316.55 829.95 V831.59 Q1316.55 833.33 1315.00 833.33" stroke-width="1.1" fill="none" stroke-linecap="round"/>
  <path d="M1464.2 833 H1459.3 L1460.6 831.6 V827.8 Q1460.6 824 1464.2 824 Q1467.8 824 1467.8 827.8 V831.6 L1469.1 833 H1464.2 M1462.8 834.6 H1465.6"/>
 </g>
</svg>
<div class="t" style="left:27.7px;top:818px;font-size:12.5px;letter-spacing:0.1px;padding-top:0;color:#e6edf3">Codespaces: musical robot</div>
<div class="t" style="left:214.9px;top:818px;font-size:12.5px;letter-spacing:0.1px;padding-top:0;color:#7d8590;-webkit-text-stroke-width:.3px">main*</div>
<div class="t" style="left:298.7px;top:818px;font-size:12.5px;letter-spacing:0;padding-top:0;color:#7d8590">0</div>
<div class="t" style="left:327.2px;top:818px;font-size:12.5px;letter-spacing:0;padding-top:0;color:#7d8590">0</div>
<div class="t" style="left:368.4px;top:818px;font-size:12.5px;letter-spacing:0;padding-top:0;color:#7d8590">0</div>
<div class="t" style="left:1062.5px;top:818px;font-size:12.5px;letter-spacing:0.1px;padding-top:0;color:#7d8590">Ln 12, Col 66</div>
<div class="t" style="left:1154.6px;top:818px;font-size:12.5px;letter-spacing:0.1px;padding-top:0;color:#7d8590">Spaces: 4</div>
<div class="t" style="left:1226.7px;top:818px;font-size:12.5px;letter-spacing:0.1px;padding-top:0;color:#7d8590">UTF-8</div>
<div class="t" style="left:1279.2px;top:818px;font-size:12.5px;letter-spacing:0.1px;padding-top:0;color:#7d8590">LF</div>
<div class="t" style="left:1326.6px;top:818px;font-size:12.5px;letter-spacing:0.1px;padding-top:0;color:#7d8590">JSON</div>
<div class="t" style="left:1373px;top:818px;font-size:12.5px;letter-spacing:0.1px;padding-top:0;color:#7d8590">Layout: U.S.</div>

</div></body></html>
